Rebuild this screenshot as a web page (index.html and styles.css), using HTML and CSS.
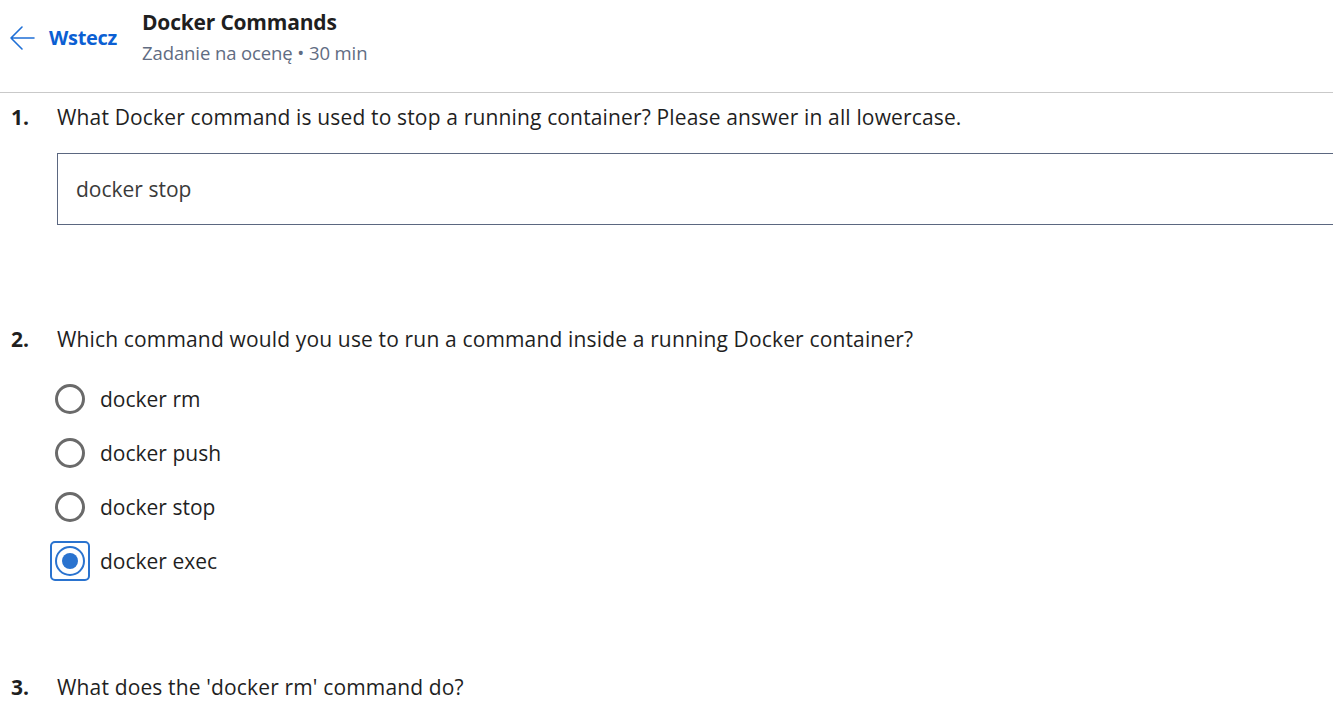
FILE: index.html
```html
<!DOCTYPE html>
<html lang="pl">
<head>
<meta charset="utf-8">
<link rel="stylesheet" href="styles.css">
</head>
<body>
<header class="top">
  <a class="back" href="#">
    <svg class="back-icon" width="26" height="26" viewBox="0 0 26 26" fill="none" stroke="#1f6fd6" stroke-width="1.6" stroke-linecap="round" stroke-linejoin="round"><path d="M25 13H2M13 2L2 13l11 11"/></svg>
    <span>Wstecz</span>
  </a>
  <div class="titles">
    <div class="title">Docker Commands</div>
    <div class="sub">Zadanie na ocenę • 30 min</div>
  </div>
</header>
<main class="quiz">
  <section class="q q1">
    <div class="q-head"><span class="num">1.</span><span class="text">What Docker command is used to stop a running container? Please answer in all lowercase.</span></div>
    <div class="answer"><span>docker stop</span></div>
  </section>
  <section class="q q2">
    <div class="q-head"><span class="num">2.</span><span class="text">Which command would you use to run a command inside a running Docker container?</span></div>
    <ul class="opts">
      <li class="opt"><span class="rbox"><span class="radio"></span></span><span>docker rm</span></li>
      <li class="opt"><span class="rbox"><span class="radio"></span></span><span>docker push</span></li>
      <li class="opt"><span class="rbox"><span class="radio"></span></span><span>docker stop</span></li>
      <li class="opt selected"><span class="rbox focus"><span class="radio on"></span></span><span>docker exec</span></li>
    </ul>
  </section>
  <section class="q q3">
    <div class="q-head"><span class="num">3.</span><span class="text">What does the 'docker rm' command do?</span></div>
  </section>
</main>
</body>
</html>
```
FILE: styles.css
```css
* { box-sizing: border-box; }
html, body { margin: 0; padding: 0; background: #fff; overflow: hidden; }
body { font-family: "Open Sans", "Noto Sans", sans-serif; color: #1f1f1f; width: 1333px; height: 726px; }
.top { display: flex; align-items: flex-start; height: 93px; border-bottom: 1px solid #c9c9c9; padding: 8px 0 0 9px; }
.back { display: flex; align-items: center; gap: 14px; text-decoration: none; color: #0b5fd3; font-weight: 700; font-size: 20px; margin-top: 16px; letter-spacing: -0.3px; }
.back-icon { display: block; }
.titles { margin-left: 25px; }
.title { font-size: 21px; font-weight: 700; color: #1f1f1f; line-height: 28px; letter-spacing: -0.2px; }
.sub { font-size: 18.5px; color: #616c82; line-height: 24px; margin-top: 5px; letter-spacing: -0.1px; }
.quiz { padding: 0; }
.q-head { display: flex; align-items: baseline; font-size: 21px; line-height: 28px; }
.num { padding-left: 11px; width: 57px; font-weight: 700; flex: none; }
.text { letter-spacing: 0.15px; }
.q1 { padding-top: 10px; }
.answer { margin: 22px 0 0 57px; height: 72px; border: 1px solid #5b6780; border-right: none; display: flex; align-items: center; padding-left: 18px; font-size: 21px; color: #3a3a3a; }
.q2 { padding-top: 100px; }
.opts { list-style: none; margin: 26px 0 0 0; padding: 0 0 0 50px; display: flex; flex-direction: column; gap: 14px; }
.opt { display: flex; align-items: center; height: 40px; font-size: 21px; gap: 10px; }
.rbox { width: 40px; height: 40px; display: flex; align-items: center; justify-content: center; flex: none; }
.radio { width: 30px; height: 30px; border: 3px solid #6a6a6a; border-radius: 50%; display: block; }
.focus { border: 2px solid #2a73cf; border-radius: 5px; }
.radio.on { border: 2.5px solid #2a73cf; position: relative; }
.radio.on::after { content: ""; position: absolute; left: 4.5px; top: 4.5px; width: 16px; height: 16px; border-radius: 50%; background: #2a73cf; }
.q3 { padding-top: 92px; }
```
